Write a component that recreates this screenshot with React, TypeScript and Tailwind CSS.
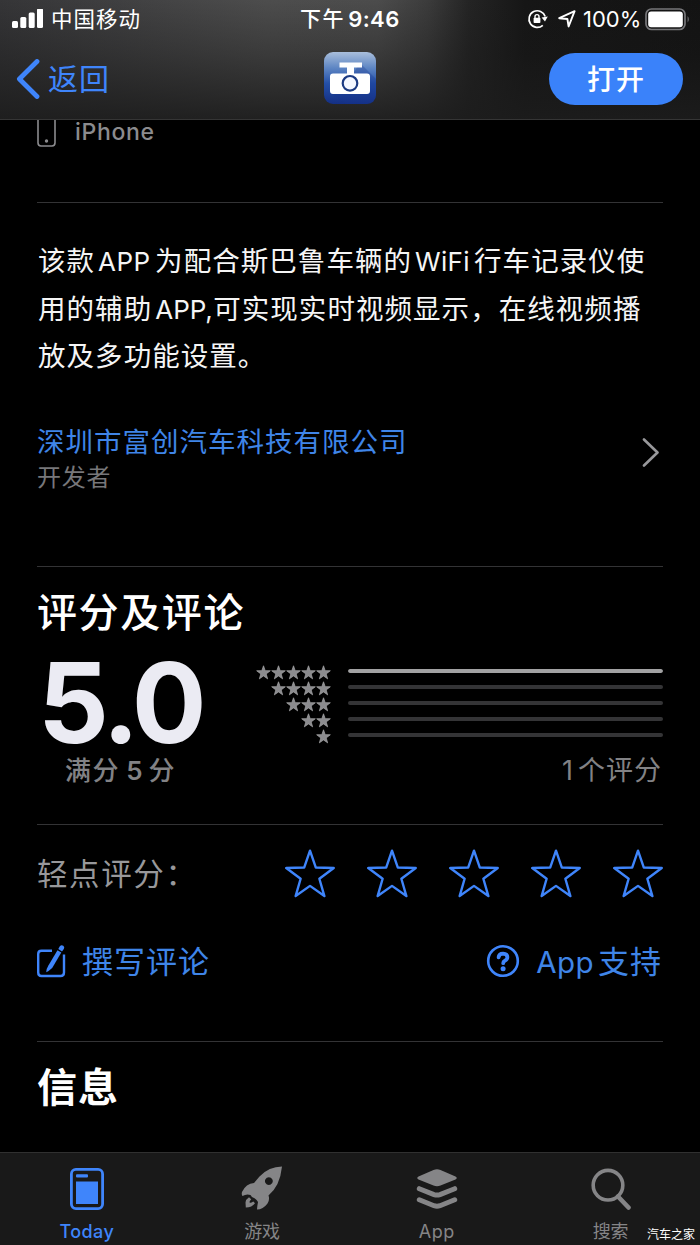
import React from 'react';

const STAR_POINTS = '12,0.8 14.8,8.9 23.4,9.1 16.5,14.3 18.9,22.6 12,17.7 5.1,22.6 7.5,14.3 0.6,9.1 9.2,8.9';

const StatusBar: React.FC = () => (
  <div className="relative flex h-[38px] items-center text-white">
    <svg width="31" height="20" viewBox="0 0 31 20" className="ml-3" fill="white">
      <rect x="0" y="12" width="6" height="7" rx="1.5" />
      <rect x="8.3" y="8" width="6" height="11" rx="1.5" />
      <rect x="16.7" y="3.5" width="6" height="15.5" rx="1.5" />
      <rect x="25" y="-0.5" width="6" height="19.5" rx="1.5" />
    </svg>
    <span className="ml-2 text-[21.5px] leading-[38px] tracking-[1px]">中国移动</span>
    <div className="absolute left-[300px] top-0 flex h-[38px] items-center text-[21px] font-medium leading-[38px]">
      <span className="tracking-[1.6px]">下午</span>
      <span className="ml-[3px] text-[22px] font-semibold tracking-[0.4px]">9:46</span>
    </div>
    <div className="absolute left-[527px] top-0 flex h-[38px] items-center">
      <svg width="22" height="20" viewBox="0 0 22 20" fill="none">
        <path d="M15.8 16.3 A8.3 8.3 0 1 1 18.2 7.5" stroke="white" strokeWidth="1.7" />
        <path d="M14.6 8.6 L20.8 7.6 L18 12.4 Z" fill="white" />
        <path d="M8 9 V7.6 a2 2 0 0 1 4 0 V9" stroke="white" strokeWidth="1.4" />
        <rect x="6.6" y="8.8" width="6.8" height="5.2" rx="0.8" fill="white" />
      </svg>
      <svg width="18" height="18" viewBox="0 0 18 18" className="ml-[9px]" fill="none">
        <path d="M1.2 8.2 L16.6 1.2 L10.6 16.4 L9.4 9 Z" stroke="white" strokeWidth="1.9" strokeLinejoin="round" />
      </svg>
      <span className="ml-[7px] w-[58px] whitespace-nowrap text-[22px] leading-[38px]">100%</span>
      <svg width="46" height="23" viewBox="0 0 46 23" className="ml-[4px]">
        <rect x="1" y="1" width="39" height="20.5" rx="5.5" fill="none" stroke="#77777a" strokeWidth="1.7" />
        <rect x="3.2" y="3.4" width="34.6" height="15.8" rx="3" fill="white" />
        <path d="M42.6 8 q2.4 3.2 0 6.6 Z" fill="#77777a" />
      </svg>
    </div>
  </div>
);

const AppIcon: React.FC = () => (
  <svg width="52" height="52" viewBox="0 0 52 52">
    <defs>
      <linearGradient id="iconBg" x1="0" y1="0" x2="0" y2="1">
        <stop offset="0" stopColor="#a9bedb" />
        <stop offset="0.3" stopColor="#5f87c4" />
        <stop offset="0.6" stopColor="#2450a8" />
        <stop offset="1" stopColor="#142f84" />
      </linearGradient>
    </defs>
    <rect width="52" height="52" rx="9" fill="url(#iconBg)" />
    <path d="M36 11 L52 27 V42 Q52 52 42 52 H22 L8 42 L30 20 Z" fill="#16358f" opacity="0.3" />
    <path d="M15.5 10.5 H38 V15.5 H30 V21.5 H43 Q46 21.5 46 24.5 V39 Q46 42 43 42 H9 Q6 42 6 39 V24.5 Q6 21.5 9 21.5 H23 V15.5 H15.5 Z" fill="white" />
    <circle cx="26" cy="31.3" r="7.3" fill="#f4f7ff" stroke="#1c3a82" strokeWidth="2.2" />
  </svg>
);

const Header: React.FC = () => (
  <header className="h-[120px] border-b border-[#353535] bg-[linear-gradient(to_bottom,rgba(24,24,24,0)_0%,rgba(24,24,24,0.35)_45%,rgba(28,28,28,0.9)_100%),linear-gradient(to_right,#353537_0%,#434344_22%,#4d4d4d_38%,#4c4c4c_54%,#3c3c3c_61%,#242424_67%,#161616_75%,#131313_100%)]">
    <StatusBar />
    <div className="relative flex h-[81px] items-center justify-between pl-4 pr-[17px]">
      <div className="flex items-center text-[#3f85fb]">
        <svg width="24" height="40" viewBox="0 0 24 40" fill="none">
          <path d="M21 2.5 L3.4 20 L21 37.5" stroke="#3f85fb" strokeWidth="4.8" strokeLinecap="round" strokeLinejoin="round" />
        </svg>
        <span className="ml-[8px] text-[30px] leading-[40px] tracking-[1px]">返回</span>
      </div>
      <div className="absolute left-[324px] top-[14px]">
        <AppIcon />
      </div>
      <button className="h-[52px] w-[134px] rounded-full bg-[#3a82fa] pt-px text-[28px] font-medium leading-[52px] tracking-[1px] text-white">
        打开
      </button>
    </div>
  </header>
);

const Divider: React.FC = () => <div className="h-px bg-[#333335]" />;

const Description: React.FC = () => (
  <div className="ml-px mt-[35px] whitespace-nowrap text-[27.5px] leading-[47.5px] tracking-[1.05px] text-[#f5f5f5]">
    <div className="flex">
      <span>该款</span>
      <span className="ml-[3px] w-[57px] text-[26px] tracking-[0.4px]">APP</span>
      <span>为配合斯巴鲁车辆的</span>
      <span className="ml-[3px] w-[59px] text-[26px] tracking-[0.3px]">WiFi</span>
      <span>行车记录仪使</span>
    </div>
    <div className="flex">
      <span>用的辅助</span>
      <span className="ml-[3px] w-[58px] text-[26px] tracking-normal">APP,</span>
      <span>可实现实时视频显示，在线视频播</span>
    </div>
    <div>放及多功能设置。</div>
  </div>
);

const Developer: React.FC = () => (
  <div className="mt-[44px] flex h-[70px] items-center justify-between">
    <div>
      <div className="text-[27.5px] leading-[35px] tracking-[1px] text-[#3f85e8]">深圳市富创汽车科技有限公司</div>
      <div className="text-[24px] leading-[35px] tracking-[0.8px] text-[#77777a]">开发者</div>
    </div>
    <svg width="20" height="30" viewBox="0 0 20 30" className="mr-[2px] mt-[-15px]" fill="none">
      <path d="M3 2.5 L16.5 15.5 L3 28.5" stroke="#98989b" strokeWidth="2.6" strokeLinecap="round" strokeLinejoin="round" />
    </svg>
  </div>
);

const RatingStars: React.FC = () => (
  <div className="flex w-[75px] flex-col items-end">
    {[5, 4, 3, 2, 1].map((count) => (
      <div key={count} className="flex h-4 items-center">
        {Array.from({ length: count }).map((_, i) => (
          <svg key={i} width="15" height="15" viewBox="-0.5 -0.5 25 25">
            <polygon points={STAR_POINTS} fill="#8b8b8e" stroke="#a4a4a6" strokeWidth="1.2" />
          </svg>
        ))}
      </div>
    ))}
  </div>
);

const RatingBars: React.FC = () => (
  <div className="flex h-[68px] w-[315px] flex-col justify-between">
    {[100, 0, 0, 0, 0].map((value, i) => (
      <div key={i} className="h-1 overflow-hidden rounded-full bg-[#343436]">
        <div className="h-full rounded-full bg-[#a2a2a3]" style={{ width: `${value}%` }} />
      </div>
    ))}
  </div>
);

const Ratings: React.FC = () => (
  <section>
    <h2 className="mt-[17px] text-[40px] font-medium leading-[58px] tracking-[1.6px] text-white">评分及评论</h2>
    <div className="flex h-[109px]">
      <div className="w-[218.5px] pl-px text-[111px] font-bold leading-[121px] tracking-[-4.2px] text-[#ebebf3]">5.0</div>
      <div className="mt-[23px]">
        <RatingStars />
      </div>
      <div className="ml-[17.5px] mt-[27px]">
        <RatingBars />
      </div>
    </div>
    <div className="flex h-[73px] justify-between pl-[28px] pr-[1px] text-[#828285]">
      <div className="flex text-[26px] font-medium leading-[39px] tracking-[1.6px]">
        <span>满分</span>
        <span className="mx-[6px] font-semibold tracking-normal">5</span>
        <span>分</span>
      </div>
      <div className="flex text-[27px] leading-[39px] tracking-[1px]">
        <span className="mr-[4px]">1</span>
        <span>个评分</span>
      </div>
    </div>
  </section>
);

const RateRow: React.FC = () => (
  <div className="flex h-[99px] items-center justify-between">
    <span className="text-[30.5px] leading-[40px] tracking-[1.6px] text-[#98989b]">轻点评分：</span>
    <div className="flex gap-[32px]">
      {[1, 2, 3, 4, 5].map((n) => (
        <svg key={n} width="50" height="50" viewBox="0 0 24 24" fill="none">
          <polygon points={STAR_POINTS} stroke="#3f85fb" strokeWidth="1.15" strokeLinejoin="round" />
        </svg>
      ))}
    </div>
  </div>
);

const Actions: React.FC = () => (
  <div className="flex h-[117px] justify-between pr-[1px] pt-[18px] text-[31px] leading-[40px] text-[#3f85e8]">
    <div className="flex items-start">
      <svg width="29" height="36" viewBox="0 0 29 36" fill="none">
        <path d="M15 8.8 H4.5 Q1.2 8.8 1.2 12 V30.5 Q1.2 34 4.5 34 H23.5 Q27 34 27 30.5 V12.5" stroke="#3f85fb" strokeWidth="2.4" />
        <path d="M20.5 8.2 L24.3 10.6 L15.2 26 L11.2 29.2 L9.2 30.2 L9.7 27 L11.4 23.4 Z" fill="#3f85fb" />
        <path d="M21.3 6.9 L22.8 4.2 Q24.4 2.4 26.3 3.7 Q28 5.2 26.8 7 L25 9.6 Z" fill="#3f85fb" />
      </svg>
      <span className="ml-[16px] tracking-[1px]">撰写评论</span>
    </div>
    <div className="flex items-start">
      <svg width="34" height="34" viewBox="0 0 34 34" className="mt-[2px]" fill="none">
        <circle cx="17" cy="17" r="14.8" stroke="#3f85fb" strokeWidth="2.6" />
        <path d="M12.6 13.4 Q12.8 9.6 17.1 9.6 Q21.4 9.8 21.4 13.2 Q21.4 15.2 19 16.6 Q17.2 17.6 17.2 19.2" stroke="#3f85fb" strokeWidth="3.8" strokeLinecap="round" />
        <circle cx="17.1" cy="24.8" r="2.5" fill="#3f85fb" />
      </svg>
      <span className="ml-[16px] text-[29.5px] tracking-[0.4px]">App</span>
      <span className="ml-[4px] tracking-[1px]">支持</span>
    </div>
  </div>
);

const TabBar: React.FC = () => (
  <nav className="relative grid h-[93px] grid-cols-4 border-t border-[#303030] bg-[#191919] pr-[1px] text-[18px] leading-[24px] text-[#858587]">
    <div className="flex flex-col items-center pr-[1px] pt-[15px] text-[#3f85fb]">
      <svg width="34" height="42" viewBox="0 0 34 42" fill="none">
        <rect x="1.4" y="1.4" width="31.2" height="39.2" rx="4.5" stroke="#3f85fb" strokeWidth="2.8" />
        <rect x="6" y="6.2" width="12" height="3.2" rx="1" fill="#3f85fb" />
        <rect x="6" y="13.5" width="22" height="22.5" fill="#3f85fb" />
      </svg>
      <span className="mt-[10px] font-medium tracking-[0.4px]">Today</span>
    </div>
    <div className="flex flex-col items-center pt-[13px]">
      <svg width="42" height="44" viewBox="0 0 42 44" fill="#858587">
        <path fillRule="evenodd" d="M41 0.5 Q28 0.5 18.5 10.5 L13 17 Q5 17.5 1 26 Q0.3 28.5 1.5 30 Q5.5 27.5 9.5 29 Q10.5 31.5 13.5 32.2 Q16 34 17 36 Q16.2 40 16 43.5 Q22 43.5 26.5 37.5 Q29 33.5 27.5 29.5 Q39 20 41 0.5 Z M27.8 11.2 a3.9 3.9 0 1 0 0.1 0 Z" />
        <path d="M8 31.2 Q4.8 33.2 4.5 36.5 L4.8 41.5 Q11 41.5 14 37.3 L12.3 35.6 Q9.4 37.4 8.6 36.5 Q8 35.5 10.2 33.2 Z" />
      </svg>
      <span className="mt-[10px]">游戏</span>
    </div>
    <div className="flex flex-col items-center pt-[15px]">
      <svg width="42" height="42" viewBox="0 0 42 42" fill="none">
        <path d="M17.5 2 Q21 0.4 24.5 2 L39.5 8.5 Q42 10 39.5 11.5 L24.5 17.5 Q21 18.8 17.5 17.5 L2.5 11.5 Q0 10 2.5 8.5 Z" fill="#858587" />
        <path d="M3.3 20.7 L18 26.6 Q21 27.6 24 26.6 L38.7 20.7 M3.3 31.8 L18 37.7 Q21 38.7 24 37.7 L38.7 31.8" stroke="#858587" strokeWidth="5" strokeLinecap="round" />
      </svg>
      <span className="mt-[10px] tracking-[0.6px]">App</span>
    </div>
    <div className="flex flex-col items-center pr-[2px] pt-[15px]">
      <svg width="42" height="42" viewBox="0 0 42 42" fill="none">
        <circle cx="18" cy="17.2" r="14.8" stroke="#858587" strokeWidth="3.6" />
        <path d="M28 28.5 L38.5 39.5" stroke="#858587" strokeWidth="4.6" strokeLinecap="round" />
      </svg>
      <span className="mt-[10px]">搜索</span>
    </div>
    <div className="absolute bottom-[2px] right-[5px] text-[12px] leading-[16px] text-white">汽车之家</div>
  </nav>
);

const App: React.FC = () => {
  return (
    <div className="flex h-[1245px] w-[700px] flex-col overflow-hidden bg-black font-[Inter,'Noto_Sans_CJK_SC',sans-serif]">
      <Header />
      <main className="flex-1 px-[37px]">
        <div className="flex h-[82px] items-start text-[#8b8b8e]">
          <svg width="19" height="27" viewBox="0 0 19 27" fill="none">
            <path d="M1 0 V22.8 Q1 26 4 26 H15 Q18 26 18 22.8 V0" stroke="#8b8b8e" strokeWidth="1.6" />
            <circle cx="9.5" cy="21" r="1.7" fill="#8b8b8e" />
          </svg>
          <span className="ml-[19px] text-[23px] font-medium leading-[24px] tracking-[0.7px]">iPhone</span>
        </div>
        <Divider />
        <Description />
        <Developer />
        <div className="h-[71px]" />
        <Divider />
        <Ratings />
        <Divider />
        <RateRow />
        <Actions />
        <Divider />
        <h2 className="mt-[17px] text-[40px] font-semibold leading-[58px] tracking-[1px] text-white">信息</h2>
      </main>
      <TabBar />
    </div>
  );
};

export default App;
